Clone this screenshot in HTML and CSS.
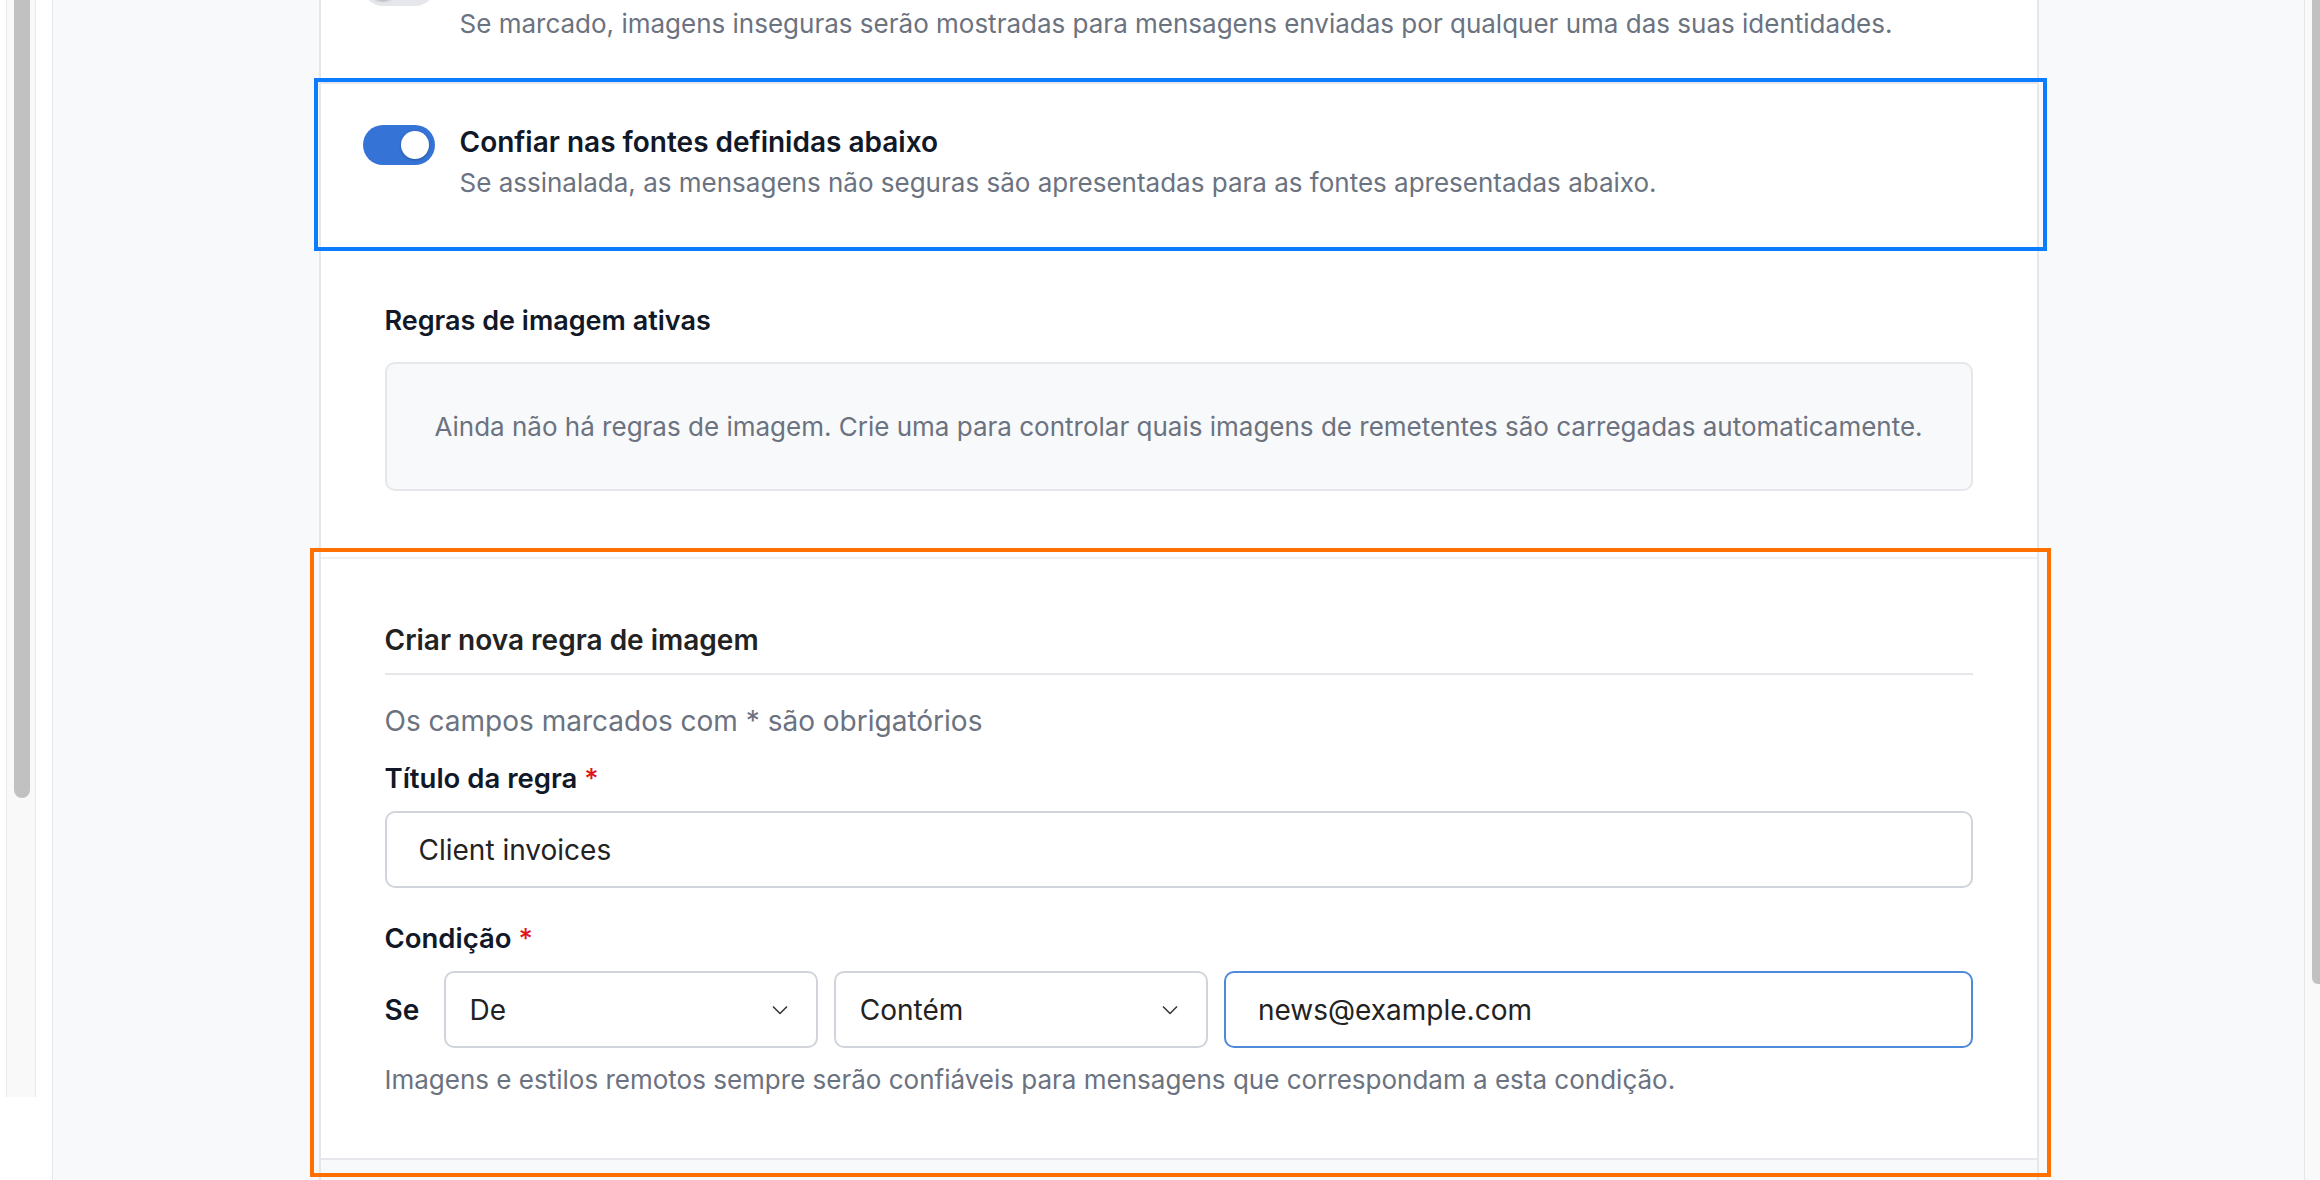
FILE: index.html
```html
<!doctype html>
<html>
<head>
<meta charset="utf-8">
<meta name="viewport" content="width=device-width, initial-scale=1" />
<title>Imagens remotas</title>
<link rel="stylesheet" href="styles.css">
</head>

<body>
	<div class="frame">

		<aside class="gutter gutter-left">
			<div class="track"><div class="thumb"></div></div>
		</aside>

		<main class="canvas">
			<div class="panel">

				<div class="opt">
					<div class="switch"><span class="knob"></span></div>
					<div class="opt-text">
						<div class="opt-title">Mostrar imagens inseguras</div>
						<div class="opt-desc">Se marcado, imagens inseguras serão mostradas para mensagens enviadas por qualquer uma das suas identidades.</div>
					</div>
				</div>

				<div class="opt marked-blue">
					<div class="switch on"><span class="knob"></span></div>
					<div class="opt-text">
						<div class="opt-title">Confiar nas fontes definidas abaixo</div>
						<div class="opt-desc">Se assinalada, as mensagens não seguras são apresentadas para as fontes apresentadas abaixo.</div>
					</div>
				</div>

				<section class="rules">
					<h3 class="rules-title">Regras de imagem ativas</h3>
					<div class="empty">Ainda não há regras de imagem. Crie uma para controlar quais imagens de remetentes são carregadas automaticamente.</div>
				</section>

				<section class="create marked-orange">
					<h3 class="create-title">Criar nova regra de imagem</h3>
					<p class="req-note">Os campos marcados com * são obrigatórios</p>

					<label class="field-label" for="rule-title">Título da regra <span class="req">*</span></label>
					<input class="field" id="rule-title" type="text" value="Client invoices">

					<div class="field-label label-cond">Condição <span class="req">*</span></div>
					<div class="cond">
						<span class="cond-if">Se</span>
						<div class="select">
							<span>De</span>
							<svg width="16" height="10" viewBox="0 0 16 10"><path d="M1 1.5 L8 8.5 L15 1.5" fill="none" stroke="#333" stroke-width="1.5"/></svg>
						</div>
						<div class="select">
							<span>Contém</span>
							<svg width="16" height="10" viewBox="0 0 16 10"><path d="M1 1.5 L8 8.5 L15 1.5" fill="none" stroke="#333" stroke-width="1.5"/></svg>
						</div>
						<input class="field field-value focus" type="text" value="news@example.com">
					</div>
					<p class="help">Imagens e estilos remotos sempre serão confiáveis para mensagens que correspondam a esta condição.</p>
				</section>

				<div class="panel-foot"></div>
			</div>
		</main>

		<aside class="gutter gutter-right">
			<div class="track"><div class="thumb"></div></div>
		</aside>

	</div>
</body>
</html>
```

FILE: styles.css
```css
body {
	margin: 0;
	height: 1180px;
	overflow: hidden;
	font-family: Inter, "Noto Sans", sans-serif;
	color: #111827;
	background: #ffffff;
}

.frame {
	display: flex;
	height: 1180px;
}

/* scroll gutters */
.gutter {
	flex-shrink: 0;
	background: #ffffff;
}
.gutter-left {
	width: 52px;
	border-right: 1px solid #e5e7eb;
}
.gutter-left .track {
	margin-left: 6px;
	width: 28px;
	height: 1097px;
	background: #f9f9f9;
	border-left: 1px solid #e9e9e9;
	border-right: 1px solid #e9e9e9;
}
.gutter-left .thumb {
	margin-left: 7px;
	width: 16px;
	height: 798px;
	background: #c1c1c1;
	border-radius: 0 0 8px 8px;
}
.gutter-right {
	width: 15px;
	border-left: 1px solid #e5e7eb;
	overflow: hidden;
}
.gutter-right .track {
	height: 1180px;
	background: #f9f9f9;
}
.gutter-right .thumb {
	margin-left: 7px;
	width: 14px;
	height: 984px;
	background: #c1c1c1;
	border-radius: 0 0 6px 6px;
}

.canvas {
	flex: 1;
	background: #f8f9fb;
	display: flex;
	justify-content: center;
	overflow: hidden;
}

.panel {
	width: 1716px;
	margin-top: -77px;
	background: #ffffff;
	border-left: 2px solid #e5e7eb;
	border-right: 2px solid #e5e7eb;
	display: flex;
	flex-direction: column;
}

/* toggle rows */
.opt {
	display: flex;
	align-items: flex-start;
	gap: 25px;
	padding: 40px 42px;
	border-top: 2px solid #e5e7eb;
}
.switch {
	flex-shrink: 0;
	box-sizing: border-box;
	width: 72px;
	height: 40px;
	margin-top: 1px;
	padding: 0 6px;
	border-radius: 20px;
	background: #e5e7eb;
	display: flex;
	align-items: center;
}
.switch.on {
	background: #3574d6;
	justify-content: flex-end;
}
.knob {
	width: 28px;
	height: 28px;
	border-radius: 50%;
	background: #ffffff;
	box-shadow: 0 1px 3px rgba(0, 0, 0, 0.28);
}
.opt-title {
	font-size: 28px;
	font-weight: 600;
	line-height: 36px;
	color: #111827;
}
.opt-desc {
	margin-top: 5px;
	font-size: 26px;
	line-height: 36px;
	color: #6b7280;
}

/* highlight frames */
.marked-blue,
.marked-orange {
	position: relative;
}
.marked-blue::after,
.marked-orange::after {
	content: "";
	position: absolute;
	pointer-events: none;
}
.marked-blue::after {
	top: -6px;
	left: -7px;
	right: -10px;
	bottom: -10px;
	border: 4px solid #0a7cff;
}
.marked-orange::after {
	top: -11px;
	left: -11px;
	right: -14px;
	bottom: -19px;
	border: 4px solid #ff7000;
}

/* active rules */
.rules {
	padding: 62px 64px 66px;
}
.rules-title,
.create-title {
	margin: 0;
	font-weight: 600;
	line-height: 36px;
}
.rules-title {
	margin-bottom: 23px;
	font-size: 27px;
	color: #111827;
}
.empty {
	height: 125px;
	display: flex;
	align-items: center;
	justify-content: center;
	background: #f8f9fa;
	border: 2px solid #e5e7eb;
	border-radius: 10px;
	font-size: 26px;
	color: #6b7280;
}

/* new rule form */
.create {
	padding: 63px 64px 60px;
	border-top: 2px solid #eef0f2;
	border-bottom: 2px solid #e5e7eb;
}
.create-title {
	padding-bottom: 15px;
	border-bottom: 2px solid #e5e7eb;
	font-size: 28px;
	color: #222222;
}
.req-note {
	margin: 28px 0 0;
	font-size: 28px;
	line-height: 36px;
	color: #6b7280;
}
.field-label {
	display: block;
	margin-top: 21px;
	font-size: 27.5px;
	font-weight: 600;
	line-height: 36px;
	color: #111827;
}
.label-cond {
	margin-top: 32px;
}
.req {
	color: #e0161b;
	font-weight: 500;
}
.field {
	display: block;
	box-sizing: border-box;
	width: 100%;
	height: 77px;
	margin-top: 15px;
	padding: 0 32px;
	border: 2px solid #d1d5db;
	border-radius: 10px;
	background: #ffffff;
	font-family: inherit;
	font-size: 28px;
	color: #222222;
	outline: none;
}
.cond {
	display: grid;
	grid-template-columns: 43px minmax(0, 1fr) minmax(0, 1fr) minmax(0, 2fr);
	align-items: center;
	gap: 16px;
	margin-top: 15px;
}
.cond-if {
	font-size: 28px;
	font-weight: 600;
	color: #111827;
}
.select {
	box-sizing: border-box;
	height: 77px;
	padding: 0 28px 0 24px;
	display: flex;
	align-items: center;
	justify-content: space-between;
	border: 2px solid #d1d5db;
	border-radius: 10px;
	font-size: 28px;
	color: #222222;
}
.field-value {
	width: 100%;
	margin-top: 0;
}
.field.focus {
	border-color: #4d8ad9;
}
.help {
	margin: 14px 0 0;
	font-size: 26px;
	line-height: 36px;
	color: #6b7280;
}

.panel-foot {
	flex: 1;
	background: #f8f9fb;
}
```
